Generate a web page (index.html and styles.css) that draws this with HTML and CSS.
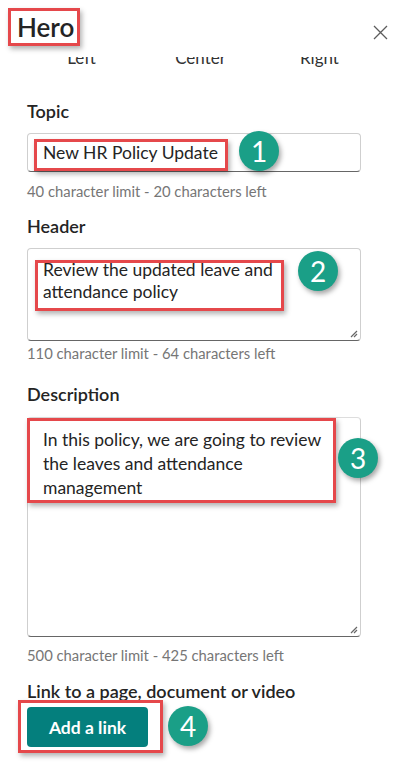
FILE: index.html
```html
<!DOCTYPE html>
<html lang="en">
<head>
  <meta charset="UTF-8" />
  <meta name="viewport" content="width=device-width, initial-scale=1.0"/>
  <title>Hero</title>
  <link rel="stylesheet" href="styles.css">
</head>
<body>
  <div class="panel">
    <div class="top">
      <h1 class="mark title">Hero</h1>
      <button class="close" aria-label="Close">
        <svg width="15" height="15" viewBox="0 0 15 15"><path d="M1 1L14 14M14 1L1 14" stroke="#5c5c5c" stroke-width="1.3" fill="none"/></svg>
      </button>
    </div>

    <!-- alignment tabs, scrolled under the header -->
    <div class="align-clip">
      <div class="align">
        <span>Left</span><span>Center</span><span>Right</span>
      </div>
    </div>

    <form class="form">
      <label class="label label-topic">Topic</label>
      <div class="field field-topic">
        <span class="mark value">New HR Policy Update</span>
        <span class="badge badge-1">1</span>
      </div>
      <p class="hint hint-topic">40 character limit - 20 characters left</p>

      <label class="label label-header">Header</label>
      <div class="field field-header">
        <span class="mark multi"><span class="txt">Review the updated leave and<br>attendance policy</span></span>
        <span class="badge badge-2">2</span>
        <svg class="grip" width="10" height="10" viewBox="0 0 10 10"><path d="M9 3L3 9M9 6L6 9" stroke="#666" stroke-width="1.2" fill="none"/></svg>
      </div>
      <p class="hint hint-header">110 character limit - 64 characters left</p>

      <label class="label label-desc">Description</label>
      <div class="field field-desc">
        <span class="mark desc">In this policy, we are going to review<br>the leaves and attendance<br>management</span>
        <span class="badge badge-3">3</span>
        <svg class="grip" width="10" height="10" viewBox="0 0 10 10"><path d="M9 3L3 9M9 6L6 9" stroke="#666" stroke-width="1.2" fill="none"/></svg>
      </div>
      <p class="hint hint-desc">500 character limit - 425 characters left</p>

      <label class="label label-link">Link to a page, document or video</label>
      <div class="link-row">
        <span class="mark btn-wrap"><button type="button" class="add">Add a link</button></span>
        <span class="badge badge-4">4</span>
      </div>
    </form>
  </div>
</body>
</html>
```

FILE: styles.css
```css
* {
  box-sizing: border-box;
  margin: 0;
  padding: 0;
}
body {
  background: #fff;
  color: #242424;
  font-family: Lato, 'Open Sans', sans-serif;
  width: 395px;
  height: 766px;
  overflow: hidden;
}
.top {
  display: flex;
  justify-content: space-between;
  align-items: flex-start;
  padding: 8px 7px 0 8px;
}
.mark {
  border: 3px solid #e5484b;
  box-shadow: 2px 3px 5px rgba(0, 0, 0, 0.3);
}
.title {
  display: inline-block;
  font-size: 26px;
  font-weight: 600;
  line-height: 31px;
  padding: 1px 3px 0 6px;
}
.close {
  border: none;
  background: none;
  margin-top: 17px;
  width: 15px;
  height: 15px;
}
.close svg {
  display: block;
}
.align-clip {
  height: 12px;
  overflow: hidden;
  margin-top: 11px;
}
.align {
  display: grid;
  grid-template-columns: 119px 119px 119px;
  padding-left: 22px;
  font-size: 17px;
  line-height: 20px;
  margin-top: -9px;
  color: #333;
  text-align: center;
}
.form {
  padding: 0 34px 0 27px;
}
.label {
  display: block;
  font-size: 18px;
  font-weight: 600;
  line-height: 22px;
}
.label-topic {
  margin-top: 31px;
  margin-bottom: 11px;
}
.label-header {
  margin-top: 14px;
  margin-bottom: 11px;
}
.label-desc {
  margin-top: 20px;
  margin-bottom: 12px;
}
.label-link {
  margin-top: 15px;
}
.field {
  position: relative;
  border: 1px solid #cfcfcf;
  border-bottom-color: #666;
  border-radius: 4px;
  font-size: 17.5px;
}
.field-topic {
  height: 39px;
  padding: 5px 0 0 6px;
}
.value {
  display: inline-block;
  line-height: 22px;
  padding: 0 7px 4px 6px;
}
.field-header {
  height: 93px;
  padding: 11px 0 0 7px;
}
.multi {
  display: inline-block;
  padding: 0 8px 5px 5px;
  line-height: 22px;
}
.txt {
  display: block;
  margin-top: -4px;
}
.field-desc {
  height: 220px;
  border-top-color: #ddd;
}
.desc {
  display: inline-block;
  line-height: 24px;
  padding: 7px 12px 0 13px;
  margin-left: -1px;
}
.grip {
  position: absolute;
  right: 2px;
  bottom: 2px;
}
.hint {
  font-size: 14.8px;
  line-height: 20px;
  color: #767676;
}
.hint-topic { margin-top: 9px; }
.hint-header { margin-top: 2px; }
.hint-desc { margin-top: 8px; }
.badge {
  position: absolute;
  width: 40px;
  height: 40px;
  border-radius: 50%;
  background: #1a9f87;
  color: #fff;
  font-size: 28px;
  line-height: 40px;
  text-align: center;
  box-shadow: 2px 3px 5px rgba(0, 0, 0, 0.35);
}
.badge-1 { left: 211px; top: -3px; }
.badge-2 { left: 270px; top: 2px; }
.badge-3 { left: 310px; top: 20px; }
.link-row {
  position: relative;
  margin: -2px 0 0 -9px;
}
.btn-wrap {
  display: inline-block;
  padding: 4px 12px 3px 6px;
}
.add {
  display: block;
  width: 121px;
  height: 40px;
  border: none;
  border-radius: 4px;
  background: #047f7d;
  color: #fff;
  font-family: Lato, 'Open Sans', sans-serif;
  font-size: 17.5px;
  font-weight: 700;
}
.badge-4 { left: 150px; top: 6px; }
```
